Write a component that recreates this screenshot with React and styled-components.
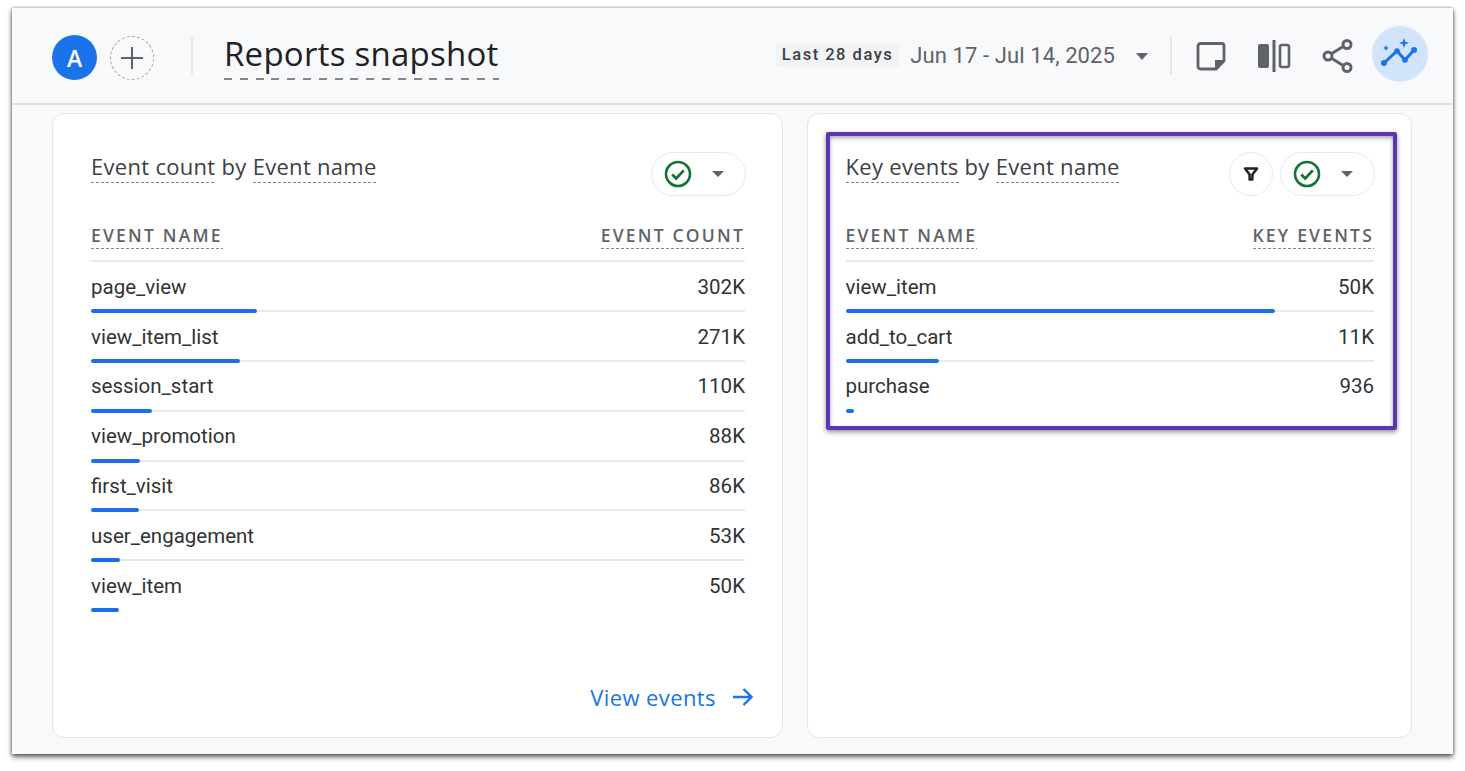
import React from 'react';
import styled, { createGlobalStyle } from 'styled-components';

const GlobalStyle = createGlobalStyle`
  html, body {
    margin: 0;
    padding: 0;
    background: #fff;
    overflow: hidden;
  }
  body {
    min-height: 100vh;
    padding: 8px 0 0 12px;
  }
  * {
    box-sizing: border-box;
  }
`;

const eventRows = [
  { name: 'page_view', value: '302K', bar: 166 },
  { name: 'view_item_list', value: '271K', bar: 149 },
  { name: 'session_start', value: '110K', bar: 61 },
  { name: 'view_promotion', value: '88K', bar: 49 },
  { name: 'first_visit', value: '86K', bar: 48 },
  { name: 'user_engagement', value: '53K', bar: 29 },
  { name: 'view_item', value: '50K', bar: 28 },
];

const keyRows = [
  { name: 'view_item', value: '50K', bar: 429 },
  { name: 'add_to_cart', value: '11K', bar: 93 },
  { name: 'purchase', value: '936', bar: 8 },
];

const CheckIcon = () => (
  <svg width="28" height="28" viewBox="0 0 28 28" fill="none">
    <circle cx="14" cy="14" r="12" stroke="#137333" strokeWidth="2.6" />
    <path d="M8.2 14.4l4 4 7.6-8" stroke="#137333" strokeWidth="2.8" />
  </svg>
);

const FilterIcon = () => (
  <svg width="16" height="16" viewBox="0 0 16 16" fill="none">
    <path d="M2 2.5h12L9.4 8.4V13.5H6.6V8.4z" stroke="#202124" strokeWidth="2.5" strokeLinejoin="round" />
  </svg>
);

const NoteIcon = () => (
  <svg width="32" height="32" viewBox="0 0 32 32" fill="none">
    <path d="M3 6a2.5 2.5 0 0 1 2.5-2.5h21A2.5 2.500 0 0 1 29 6v15l-8 8H5.500A2.500 2.500 0 0 1 3 26.500z" stroke="#5f6368" strokeWidth="2.800" />
    <path d="M29 20h-9v9z" fill="#5f6368" />
  </svg>
);

const CompareIcon = () => (
  <svg width="34" height="34" viewBox="0 0 34 34" fill="none">
    <rect x="1" y="5" width="11" height="24" rx="2" fill="#5f6368" />
    <rect x="15.500" y="1" width="3" height="32" fill="#5f6368" />
    <rect x="23" y="6" width="9" height="22" rx="2" stroke="#5f6368" strokeWidth="2.600" />
  </svg>
);

const ShareIcon = () => (
  <svg width="32" height="34" viewBox="0 0 32 34" fill="none" stroke="#5f6368" strokeWidth="3">
    <path d="M9 15l13-8M9 19l13 8" />
    <circle cx="6" cy="17" r="4" />
    <circle cx="25" cy="5.500" r="4" />
    <circle cx="25" cy="28.500" r="4" />
  </svg>
);

const InsightsIcon = () => (
  <svg width="38" height="34" viewBox="0 0 38 34" fill="#1a73e8">
    <path d="M3 26l13-12 8 9 9-10" fill="none" stroke="#1a73e8" strokeWidth="3" />
    <circle cx="3" cy="26" r="3" />
    <circle cx="16" cy="14" r="2.800" />
    <circle cx="24" cy="23" r="2.800" />
    <circle cx="33" cy="13" r="3" />
    <path d="M23 1l1.300 3.700 3.700 1.300-3.700 1.300-1.300 3.700-1.300-3.700-3.700-1.300 3.700-1.300z" />
    <path d="M5 8l.9 2.100 2.100.9-2.100.9-.9 2.100-.9-2.100-2.100-.9 2.100-.9z" />
  </svg>
);

const PlusIcon = () => (
  <svg width="22" height="22" viewBox="0 0 22 22" fill="none">
    <path d="M11 0v22M0 11h22" stroke="#5f6368" strokeWidth="2" />
  </svg>
);

const ArrowIcon = () => (
  <svg width="20" height="20" viewBox="0 0 20 20" fill="none">
    <path d="M0 10h18M10.500 2l8 8-8 8" stroke="#1a73e8" strokeWidth="2.400" />
  </svg>
);

function DataCard({ title, nameLabel, valueLabel, rows, filtered, footer, width }) {
  return (
    <Card $width={width}>
      <CardHead>
        <CardTitle>{title}</CardTitle>
        <ChipGroup>
          {filtered && <FilterChip><FilterIcon /></FilterChip>}
          <StatusChip>
            <CheckIcon />
            <SmallCaret />
          </StatusChip>
        </ChipGroup>
      </CardHead>
      <TableHead>
        <ColLabel>{nameLabel}</ColLabel>
        <ColLabel>{valueLabel}</ColLabel>
      </TableHead>
      <RowList>
        {rows.map((row, i) => (
          <Row key={row.name}>
            <RowText>
              <span>{row.name}</span>
              <span>{row.value}</span>
            </RowText>
            <Track $last={i === rows.length - 1}>
              <Bar style={{ width: row.bar }} />
            </Track>
          </Row>
        ))}
      </RowList>
      {footer && (
        <FooterLink>
          {footer}
          <ArrowIcon />
        </FooterLink>
      )}
    </Card>
  );
}

export default function App() {
  return (
    <>
      <GlobalStyle />
      <Window>
        <Header>
          <HeadLeft>
            <Avatar>A</Avatar>
            <AddButton><PlusIcon /></AddButton>
            <Divider $left={37} $right={31} />
            <PageTitle>Reports snapshot</PageTitle>
          </HeadLeft>
          <HeadRight>
            <RangeTag>Last 28 days</RangeTag>
            <DateText>Jun 17 - Jul 14, 2025</DateText>
            <BigCaret />
            <Divider $left={22} $right={23} />
            <IconSlot $width={32}><NoteIcon /></IconSlot>
            <IconSlot $width={34} $gap={30}><CompareIcon /></IconSlot>
            <IconSlot $width={32} $gap={31}><ShareIcon /></IconSlot>
            <InsightsButton><InsightsIcon /></InsightsButton>
          </HeadRight>
        </Header>
        <Content>
          <DataCard
            title={<><Dashed>Event count</Dashed> by <Dashed>Event name</Dashed></>}
            nameLabel="EVENT NAME"
            valueLabel="EVENT COUNT"
            rows={eventRows}
            footer="View events"
            width={731}
          />
          <RightColumn>
            <DataCard
              title={<><Dashed>Key events</Dashed> by <Dashed>Event name</Dashed></>}
              nameLabel="EVENT NAME"
              valueLabel="KEY EVENTS"
              rows={keyRows}
              filtered
              width={605.5}
            />
            <Highlight />
          </RightColumn>
        </Content>
      </Window>
    </>
  );
}

const Window = styled.div`
  width: 1441px;
  height: 746px;
  background: #f8f9fa;
  box-shadow: 0 3px 5px 0 rgba(0, 0, 0, 0.6), 0 0 3px 0 rgba(0, 0, 0, 0.4);
  display: flex;
  flex-direction: column;
  font-family: Roboto, "Liberation Sans", sans-serif;
`;

const Header = styled.header`
  height: 97px;
  flex: none;
  display: flex;
  align-items: center;
  justify-content: space-between;
  padding: 0 25px 0 40px;
  border-bottom: 2px solid #dcdee0;
`;

const HeadLeft = styled.div`
  display: flex;
  align-items: center;
  height: 100%;
`;

const HeadRight = styled.div`
  display: flex;
  align-items: center;
  height: 100%;
`;

const Avatar = styled.div`
  width: 45px;
  height: 45px;
  border-radius: 50%;
  background: #1a73e8;
  color: #fff;
  font: 600 23px "Open Sans", sans-serif;
  display: flex;
  align-items: center;
  justify-content: center;
  margin-top: 4px;
`;

const AddButton = styled.div`
  width: 44px;
  height: 44px;
  margin-left: 13px;
  margin-top: 4px;
  border-radius: 50%;
  border: 1.500px dashed #9aa0a6;
  display: flex;
  align-items: center;
  justify-content: center;
`;

const Divider = styled.div`
  width: 2px;
  height: 37px;
  background: #e3e5e8;
  margin: 0 ${(p) => p.$right}px 0 ${(p) => p.$left}px;
`;

const PageTitle = styled.h1`
  margin: 0;
  font: 400 33px/44px "Open Sans", sans-serif;
  letter-spacing: 0.25px;
  color: #202124;
  padding-bottom: 4px;
  background: repeating-linear-gradient(to right, #80868b 0 8px, transparent 8px 15.800px) left bottom / 100% 2px no-repeat;
`;

const RangeTag = styled.div`
  height: 24px;
  padding: 0 6px;
  margin-top: -2px;
  border-radius: 2px;
  background: #f1f3f4;
  color: #3c4043;
  font: 500 16.500px/24px Roboto, sans-serif;
  letter-spacing: 1.500px;
`;

const DateText = styled.div`
  margin-left: 11px;
  font: 400 22px Roboto, sans-serif;
  letter-spacing: 0.1px;
  color: #5f6368;
`;

const BigCaret = styled.div`
  margin-left: 21px;
  margin-top: 2px;
  border-left: 6.500px solid transparent;
  border-right: 6.500px solid transparent;
  border-top: 7px solid #5f6368;
`;

const IconSlot = styled.div`
  width: ${(p) => p.$width}px;
  margin-left: ${(p) => p.$gap || 0}px;
  display: flex;
  align-items: center;
  justify-content: center;
`;

const InsightsButton = styled.div`
  width: 56px;
  height: 56px;
  margin-left: 18px;
  margin-top: -3px;
  border-radius: 50%;
  background: #d2e3fc;
  display: flex;
  align-items: center;
  justify-content: center;
`;

const Content = styled.main`
  flex: 1;
  display: flex;
  gap: 23.500px;
  padding: 8px 0 16px 40px;
`;

const RightColumn = styled.div`
  position: relative;
  display: flex;
`;

const Card = styled.section`
  width: ${(p) => p.$width}px;
  background: #fff;
  border: 1.500px solid #e3e5e8;
  border-radius: 12px;
  padding: 38px 37px 0 38px;
  display: flex;
  flex-direction: column;
`;

const CardHead = styled.div`
  height: 44px;
  display: flex;
  justify-content: space-between;
  align-items: flex-start;
`;

const CardTitle = styled.h2`
  margin: -1px 0 0;
  font: 500 22px/30px "Open Sans", sans-serif;
  letter-spacing: 0.3px;
  color: #3c4043;
`;

const Dashed = styled.span`
  padding-bottom: 2px;
  background: repeating-linear-gradient(to right, #80868b 0 3px, transparent 3px 5px) left bottom / 100% 1px no-repeat;
`;

const ChipGroup = styled.div`
  display: flex;
  gap: 7px;
  margin-right: -1px;
`;

const FilterChip = styled.div`
  width: 44px;
  height: 44px;
  border-radius: 50%;
  border: 1.500px solid #e8eaed;
  display: flex;
  align-items: center;
  justify-content: center;
`;

const StatusChip = styled.div`
  width: 95px;
  height: 44px;
  border-radius: 22px;
  border: 1.500px solid #e8eaed;
  display: flex;
  align-items: center;
  gap: 20px;
  padding-left: 12px;
`;

const SmallCaret = styled.div`
  border-left: 6.500px solid transparent;
  border-right: 6.500px solid transparent;
  border-top: 6.500px solid #5f6368;
`;

const TableHead = styled.div`
  margin-top: 27px;
  height: 39px;
  display: flex;
  justify-content: space-between;
  align-items: flex-start;
  border-bottom: 2px solid #e8eaed;
`;

const ColLabel = styled.span`
  font: 600 17.500px/24px "Open Sans", sans-serif;
  letter-spacing: 2.200px;
  color: #5f6368;
  padding-bottom: 2px;
  background: repeating-linear-gradient(to right, #80868b 0 3px, transparent 3px 5px) left bottom / 100% 1px no-repeat;
`;

const RowList = styled.div`
  padding-top: 0.500px;
`;

const Row = styled.div`
  height: 49.800px;
  display: flex;
  flex-direction: column;
  justify-content: flex-end;
`;

const RowText = styled.div`
  display: flex;
  justify-content: space-between;
  font: 400 20.500px/28px Roboto, sans-serif;
  color: #303336;
  margin-bottom: 9.500px;
`;

const Track = styled.div`
  height: 2px;
  background: ${(p) => (p.$last ? 'transparent' : '#e8eaed')};
`;

const Bar = styled.div`
  height: 4px;
  margin-top: -1px;
  background: #1a6fe8;
  border-radius: 2px;
`;

const FooterLink = styled.a`
  margin-top: auto;
  margin-right: -8px;
  margin-bottom: 27px;
  display: flex;
  justify-content: flex-end;
  align-items: center;
  gap: 17px;
  font: 500 22px/26px "Open Sans", sans-serif;
  letter-spacing: 0.4px;
  color: #1a73e8;
`;

const Highlight = styled.div`
  position: absolute;
  left: 19.500px;
  top: 19px;
  width: 571px;
  height: 298px;
  border: 4.500px solid #5e35b1;
  border-radius: 2px;
  box-shadow: 0 2px 5px rgba(0, 0, 0, 0.45), inset 0 2px 4px rgba(0, 0, 0, 0.35);
  pointer-events: none;
`;
